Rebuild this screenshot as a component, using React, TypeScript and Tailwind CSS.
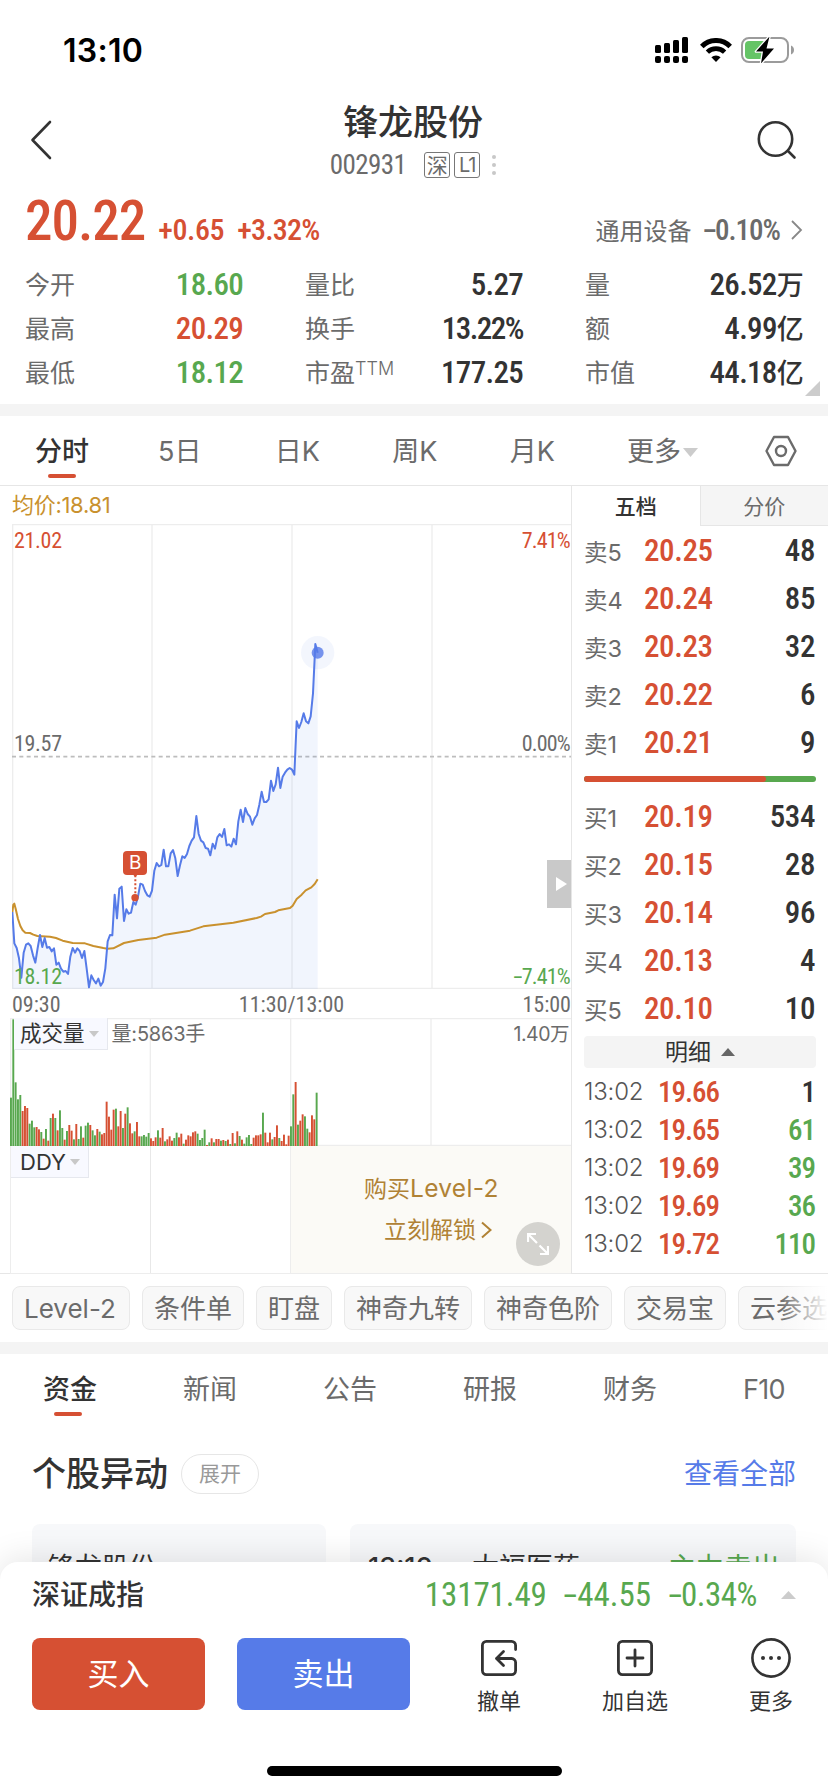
import { clsx } from "clsx";

const INK = "#333333";
const RED = "#d65033";
const GREEN = "#58a84f";
const BLUE = "#567be8";

type Tone = "up" | "down" | "flat";

const toneClass: Record<Tone, string> = {
  up: "text-[#d65033]",
  down: "text-[#58a84f]",
  flat: "text-[#333333]",
};

const stats: { label: string; sup?: string; value: string; tone: Tone }[] = [
  { label: "今开", value: "18.60", tone: "down" },
  { label: "量比", value: "5.27", tone: "flat" },
  { label: "量", value: "26.52万", tone: "flat" },
  { label: "最高", value: "20.29", tone: "up" },
  { label: "换手", value: "13.22%", tone: "flat" },
  { label: "额", value: "4.99亿", tone: "flat" },
  { label: "最低", value: "18.12", tone: "down" },
  { label: "市盈", sup: "TTM", value: "177.25", tone: "flat" },
  { label: "市值", value: "44.18亿", tone: "flat" },
];

const asks = [
  ["卖5", "20.25", "48"],
  ["卖4", "20.24", "85"],
  ["卖3", "20.23", "32"],
  ["卖2", "20.22", "6"],
  ["卖1", "20.21", "9"],
];

const bids = [
  ["买1", "20.19", "534"],
  ["买2", "20.15", "28"],
  ["买3", "20.14", "96"],
  ["买4", "20.13", "4"],
  ["买5", "20.10", "10"],
];

const trades: [string, string, string, Tone][] = [
  ["13:02", "19.66", "1", "flat"],
  ["13:02", "19.65", "61", "down"],
  ["13:02", "19.69", "39", "down"],
  ["13:02", "19.69", "36", "down"],
  ["13:02", "19.72", "110", "down"],
];

const chips = ["Level-2", "条件单", "盯盘", "神奇九转", "神奇色阶", "交易宝", "云参选股"];

// intraday price, in chart units (3 units per px)
const priceLine =
  "37,936 43,1030 50,1044 57,1075 64,1133 71,1058 78,1034 85,1030 92,1038 99,1066 106,1088 113,1044 120,1005 127,1041 134,1014 141,1043 148,1041 155,1054 162,1045 169,1094 176,1088 183,1106 190,1115 197,1113 204,1122 211,1070 218,1044 225,1058 232,1045 239,1053 246,1074 253,1053 260,1106 267,1162 274,1126 281,1140 288,1150 295,1136 302,1157 309,1146 316,1105 323,1024 330,1005 337,1006 344,884 351,955 358,866 365,860 372,963 379,928 386,941 393,938 400,906 407,914 414,890 421,851 428,854 435,873 442,886 449,890 456,872 463,812 470,789 477,799 484,795 491,749 498,799 505,799 512,760 519,750 526,775 533,828 540,796 547,769 554,774 561,762 568,738 575,722 582,712 589,648 596,702 603,722 610,727 617,744 624,746 631,766 638,731 645,746 652,712 659,702 666,711 673,687 680,736 687,733 694,740 701,716 708,733 715,664 722,629 729,666 736,624 743,642 750,650 757,674 764,655 771,645 778,614 785,575 792,606 799,606 806,598 813,542 820,573 827,553 834,503 841,564 848,530 855,518 862,509 869,504 876,509 883,524 890,364 897,384 904,366 911,340 918,364 925,370 932,349 939,280 946,132 953,158";

const averageLine =
  "37,936 40,914 43,911 47,926 54,957 61,978 68,991 76,998 90,999 100,1004 112,1008 150,1010 168,1014 188,1022 218,1029 255,1030 280,1038 310,1044 322,1046 340,1045 372,1029 415,1020 470,1013 495,1004 570,992 610,979 700,968 770,954 783,950 795,942 825,936 835,931 870,924 878,917 890,897 905,884 917,871 934,862 944,852 953,838";

// one entry per minute: bar height in chart units, r = up, g = down
const volumes =
  "145g 380g 191g 140g 153g 105r 120r 114r 67g 76g 56g 57r 50r 42g 22r 51g 16r 84g 97r 84g 47r 107g 54g 19r 45g 63r 46r 20g 66r 21g 59g 25r 61g 70g 63r 47g 32g 51r 43g 35r 39r 133r 88r 49r 109r 112g 59r 105r 54g 97r 116g 68r 38r 44g 72r 29r 29g 33g 28g 39g 23r 15r 26r 47g 25r 54r 14g 20r 29r 16r 24g 40g 26r 37r 7g 19r 32r 29r 41r 44r 37g 18g 24g 49g 3r 11g 23r 11g 21r 21r 16g 18r 15g 19r 6g 39r 8g 44r 30g 19r 7g 26g 33g 6g 25r 32r 32r 35r 100g 40r 11r 40r 20g 27r 62r 24g 15r 34r 5r 31r 59g 155g 192r 64g 76r 95r 89g 52g 41r 92r 80r 160g"
    .split(" ")
    .map((v) => ({ height: parseInt(v, 10), up: v.endsWith("r") }));

// negative number with a wide minus sign
const Negative = ({ value }: { value: string }) => (
  <>
    <span className="mx-[0.08em] inline-block scale-x-[1.7]">-</span>
    {value}
  </>
);

const StatusBar = () => (
  <div className="flex h-[88px] items-center justify-between pl-[63px] pr-[33px] pt-3">
    <span className="pt-0.5 font-['Inter'] text-[32px] font-semibold leading-none tracking-[0.3px] text-black">13:10</span>
    <div className="flex items-center gap-3">
      <svg width="33" height="26" viewBox="0 0 33 26">
        <rect x="0" y="8" width="6" height="8" rx="1.5" />
        <rect x="9" y="6" width="6" height="10" rx="1.5" />
        <rect x="18" y="3" width="6" height="13" rx="1.5" />
        <rect x="27" y="0" width="6" height="16" rx="1.5" />
        <rect x="0" y="19" width="6" height="7" rx="2" />
        <rect x="9" y="19" width="6" height="7" rx="2" />
        <rect x="18" y="19" width="6" height="7" rx="2" />
        <rect x="27" y="19" width="6" height="7" rx="2" />
      </svg>
      <svg width="32" height="24" viewBox="0 0 32 24" fill="none" stroke="#000">
        <path d="M1.8 8.4a20 20 0 0 1 28.4 0" strokeWidth="5" />
        <path d="M7.4 14.2a12.2 12.2 0 0 1 17.2 0" strokeWidth="4.6" />
        <path d="M16 24l-4.6-4.7a6.5 6.5 0 0 1 9.2 0z" fill="#000" stroke="none" />
      </svg>
      <svg width="54" height="26" viewBox="0 0 54 26" className="-ml-[3px]">
        <rect x="1" y="1" width="46" height="24" rx="7" fill="none" stroke="#9b9b9b" strokeWidth="2" />
        <path d="M50 8.500q3 1.400 3 4.500t-3 4.500z" fill="#9b9b9b" />
        <rect x="4" y="4" width="21" height="18" rx="4" fill="#65c466" />
        <path
          d="M28.500-.5L15 14.500h7L20 26.500l13-15h-7.500z"
          fill="#000"
          stroke="#fff"
          strokeWidth="2.600"
          paintOrder="stroke"
          strokeLinejoin="round"
        />
      </svg>
    </div>
  </div>
);

const Header = () => (
  <header className="flex h-[106px] items-start justify-between pl-[30px] pr-[31px]">
    <svg className="mt-[31px]" width="22" height="42" viewBox="0 0 22 42" fill="none" stroke={INK} strokeWidth="2.600">
      <path d="M20 3L2.500 21L20 39" strokeLinecap="round" strokeLinejoin="round" />
    </svg>
    <div className="flex flex-col items-center pl-[17px] pt-3">
      <h1 className="text-[35px] font-medium leading-[44px]">锋龙股份</h1>
      <div className="mt-[7px] flex h-7 items-center text-[#6b6b6b]">
        <span className="mr-[18px] font-['Roboto_Condensed'] text-[27px] leading-none tracking-[-0.6px]">002931</span>
        <span className="mr-1 flex size-[26px] items-center justify-center rounded-[3px] border border-[#777] text-[21px] leading-none">
          深
        </span>
        <span className="flex size-[26px] items-center justify-center rounded-[3px] border border-[#777] text-[20px] leading-none tracking-tighter">
          L1
        </span>
        <svg className="ml-3" width="4" height="20" viewBox="0 0 4 20" fill="#c8c8c8">
          <circle cx="2" cy="2" r="2" />
          <circle cx="2" cy="10" r="2" />
          <circle cx="2" cy="18" r="2" />
        </svg>
      </div>
    </div>
    <svg className="mt-[32px]" width="40" height="40" viewBox="0 0 40 40" fill="none" stroke={INK} strokeWidth="2.600">
      <circle cx="18.500" cy="19" r="16.700" />
      <path d="M31 31l6.500 6.500" strokeLinecap="round" />
    </svg>
  </header>
);

const Quote = () => (
  <section className="relative h-[210px] px-[25px]">
    <div className="flex h-[69px] items-baseline font-['Roboto_Condensed','Noto_Sans_CJK_SC'] leading-[55px] text-[#d65033]">
      <span className="text-[55px] font-medium tracking-[-1px]">20.22</span>
      <span className="ml-[13px] text-[30px] font-medium tracking-[-0.4px]">+0.65</span>
      <span className="ml-[13px] text-[30px] font-medium tracking-[-0.8px]">+3.32%</span>
      <span className="ml-auto text-[24px] text-[#6b6b6b]">通用设备</span>
      <span className="ml-[11px] text-[29px] font-medium tracking-[-1px] text-[#6b6b6b]">
        <Negative value="0.10%" />
      </span>
      <svg className="ml-[11px]" width="12" height="20" viewBox="0 0 12 20" fill="none" stroke="#888" strokeWidth="1.800">
        <path d="M1 1l9 9l-9 9" />
      </svg>
    </div>
    <dl className="grid grid-cols-3 gap-x-[62px]">
      {stats.map((s) => (
        <div key={s.label} className="flex h-11 items-center justify-between">
          <dt className="flex items-start text-[25px] leading-8 text-[#6b6b6b]">
            {s.label}
            {s.sup && <span className="text-[18px] font-light leading-6">{s.sup}</span>}
          </dt>
          <dd
            className={clsx(
              "font-['Roboto_Condensed','Noto_Sans_CJK_SC'] text-[31px] font-medium leading-8",
              s.value.endsWith("%") ? "tracking-[-1.5px]" : "tracking-[-0.7px]",
              toneClass[s.tone],
            )}
          >
            {s.value.replace(/[万亿]/, "")}
            <span className="text-[27px]">{s.value.match(/[万亿]/)?.[0]}</span>
          </dd>
        </div>
      ))}
    </dl>
    <svg className="absolute bottom-2 right-2" width="15" height="15" viewBox="0 0 15 15">
      <path d="M15 0v15H0z" fill="#cccccc" />
    </svg>
  </section>
);

const PeriodTabs = () => (
  <nav className="flex h-[70px] items-center border-b border-[#e6e6e6] pl-[3px] text-[27px] text-[#6b6b6b]">
    <div className="relative w-[118px] pt-[3px] text-center font-medium text-[#333]">
      分时
      <i className="absolute -bottom-[6px] left-[45px] h-1 w-7 rounded-full bg-[#d65033]" />
    </div>
    {["5日", "日K", "周K", "月K"].map((tab) => (
      <div key={tab} className="w-[117.5px] pt-[3px] text-center">
        {tab}
      </div>
    ))}
    <div className="ml-[36px] flex items-center pt-[3px]">
      更多
      <svg className="ml-0.5" width="15" height="9" viewBox="0 0 15 9">
        <path d="M0 0h15L7.500 9z" fill="#cccccc" />
      </svg>
    </div>
    <svg className="ml-auto mr-[31px]" width="32" height="32" viewBox="0 0 32 32" fill="none" stroke="#6b6b6b" strokeWidth="2.400">
      <path d="M9 2h14l7.500 14L23 30H9L1.500 16z" strokeLinejoin="round" />
      <circle cx="16" cy="16" r="5" />
    </svg>
  </nav>
);

const PriceChart = () => (
  <div className="relative ml-3 h-[465px] font-['Roboto_Condensed'] text-[22px] leading-6 tracking-[-0.3px] text-[#6b6b6b]">
    <svg className="block" width="559" height="465" viewBox="36 -228 1677 1395">
      <g stroke="#ededed" strokeWidth="4">
        <path d="M36-226H1713M36 1165H1713M38-228V1167M456-228V1167M876-228V1167M1296-228V1167" />
      </g>
      <path d="M36 470H1713" stroke="#bdbdbd" strokeWidth="5" strokeDasharray="12 10" />
      <polygon points={`37,1167 ${priceLine} 953,1167`} fill="#4f7de8" fillOpacity="0.08" />
      <polyline points={averageLine} fill="none" stroke="#c9912e" strokeWidth="6" strokeLinejoin="round" />
      <circle cx="953" cy="158" r="50" fill={BLUE} fillOpacity="0.07" />
      <circle cx="953" cy="158" r="18" fill={BLUE} fillOpacity="0.8" />
      <polyline points={priceLine} fill="none" stroke={BLUE} strokeWidth="6" strokeLinejoin="round" />
      <circle cx="405" cy="893" r="11" fill={RED} />
      <path d="M406 826V886" stroke={RED} strokeWidth="6" strokeDasharray="6 6" />
      <path d="M398 823h16l-8 8z" fill={RED} />
    </svg>
    <span className="absolute left-0.5 top-[5px] text-[#d65033]">21.02</span>
    <span className="absolute right-px top-[5px] tracking-[-0.8px] text-[#d65033]">7.41%</span>
    <span className="absolute left-0.5 top-[208px]">19.57</span>
    <span className="absolute right-px top-[208px] tracking-[-0.8px]">0.00%</span>
    <span className="absolute left-0.5 top-[441px] text-[#58a84f]">18.12</span>
    <span className="absolute right-px top-[441px] tracking-[-0.8px] text-[#58a84f]">
      <Negative value="7.41%" />
    </span>
    {/* buy marker */}
    <span className="absolute left-[111px] top-[327px] flex size-6 items-center justify-center rounded bg-[#d65033] font-['Inter'] text-[19px] text-white">
      B
    </span>
    {/* panel handle */}
    <span className="absolute right-0 top-[336px] flex h-12 w-6 items-center justify-center bg-[#c9c9c9] pl-1">
      <svg width="11" height="14" viewBox="0 0 11 14">
        <path d="M0 0l11 7l-11 7z" fill="#fff" />
      </svg>
    </span>
  </div>
);

const SubLabel = ({ text, className }: { text: string; className?: string }) => (
  <span
    className={clsx(
      "flex h-8 items-center border-b border-r border-[#e6e8ee] bg-[#f8f9ff] pr-2 leading-none text-[#333]",
      className,
    )}
  >
    {text}
    <svg className="ml-1" width="10" height="6" viewBox="0 0 10 6">
      <path d="M0 0h10L5 6z" fill="#c8c8c8" />
    </svg>
  </span>
);

const VolumeChart = () => (
  <div className="relative ml-2.5 h-[128px]">
    <svg className="block" width="561" height="128" viewBox="31 113 1683 384">
      <path d="M31 115H1714M33 113V497M452 113V497M873 113V497M1294 113V497M31 495H1714" stroke="#ededed" strokeWidth="4" />
      {volumes.map((v, i) => (
        <rect key={i} x={31 + i * 7} y={497 - v.height} width="5.800" height={v.height} fill={v.up ? RED : GREEN} />
      ))}
    </svg>
    <div className="absolute left-1 top-0 flex items-center text-[#6b6b6b]">
      <SubLabel text="成交量" className="pl-1.5 text-[21.5px]" />
      <span className="ml-1 text-[20px] leading-none tracking-[-0.2px]">量:5863手</span>
    </div>
    <span className="absolute right-0.5 top-1 text-[19.5px] leading-6 tracking-tight text-[#6b6b6b]">1.40万</span>
  </div>
);

const DdyPanel = () => (
  <div className="ml-2.5 flex h-[128px] border-b border-l border-[#ededed]">
    <div className="flex w-[140px] items-start border-r border-[#e8e8e8]">
      <SubLabel text="DDY" className="pl-[9px] text-[22px]" />
    </div>
    <div className="w-[140px] border-r border-[#ededed]" />
    <div className="relative flex-1 bg-[#fbfaf6] text-[23px] leading-8 text-[#b08235]">
      <p className="h-8 pl-[73px] pt-[26px]">
        购买<span className="text-[24.5px] tracking-[0.3px]">Level-2</span>
      </p>
      <p className="mt-[36px] flex items-center pl-[93px]">
        立刻解锁
        <svg className="ml-[5px]" width="11" height="18" viewBox="0 0 11 18" fill="none" stroke="#b08235" strokeWidth="2">
          <path d="M1 1.500l8.500 7.500L1 16.500" />
        </svg>
      </p>
      <span className="absolute bottom-[7px] right-[11px] flex size-11 items-center justify-center rounded-full bg-[#d4d3cf]">
        <svg width="22" height="22" viewBox="0 0 22 22" fill="none" stroke="#fff" strokeWidth="2.200">
          <path d="M1 9V1h8M1 1l9 9M21 13v8h-8M21 21l-8.500-8.500" />
        </svg>
      </span>
    </div>
  </div>
);

const BookRow = ({ row }: { row: string[] }) => (
  <div className="flex h-12 items-center font-['Roboto_Condensed'] text-[31px] font-medium leading-none tracking-[-0.4px]">
    <span className="mt-[5px] w-[60px] font-['Inter','Noto_Sans_CJK_SC'] text-[23.5px] font-normal tracking-normal text-[#6b6b6b]">
      {row[0]}
    </span>
    <span className="text-[#d65033]">{row[1]}</span>
    <span className="ml-auto text-[#333]">{row[2]}</span>
  </div>
);

const OrderBook = () => (
  <aside className="w-[257px] border-l border-[#e6e6e6]">
    <div className="flex h-10 text-center text-[21px] leading-[41px]">
      <div className="flex-1 font-medium text-[#333]">五档</div>
      <div className="flex-1 border-b border-l border-[#e6e6e6] bg-[#f5f5f5] text-[#6b6b6b]">分价</div>
    </div>
    <div className="pl-3 pr-[13px]">
      {asks.map((row) => (
        <BookRow key={row[0]} row={row} />
      ))}
      <div className="my-2.5 -mr-px h-1.5 rounded-full bg-[#58a84f]">
        <div className="h-full w-[182px] rounded-full bg-[#d65033]" />
      </div>
      {bids.map((row) => (
        <BookRow key={row[0]} row={row} />
      ))}
      <div className="-mr-px mb-[5px] mt-1 flex h-8 items-center justify-center rounded bg-[#f4f4f4] text-[23px] leading-none">
        明细
        <svg className="ml-2.5" width="14" height="8" viewBox="0 0 14 8">
          <path d="M0 8h14L7 0z" fill="#666" />
        </svg>
      </div>
      {trades.map(([time, price, volume, tone], i) => (
        <div
          key={i}
          className="flex h-[38px] items-center font-['Roboto_Condensed'] text-[29px] font-medium leading-none tracking-[-1px]"
        >
          <span className="w-[74px] font-['Inter'] text-[24px] font-light tracking-[-0.2px] text-[#555]">{time}</span>
          <span className="text-[#d65033]">{price}</span>
          <span className={clsx("ml-auto", toneClass[tone])}>{volume}</span>
        </div>
      ))}
    </div>
  </aside>
);

const NewsTabs = () => (
  <nav className="flex h-[76px] pl-[43px] pt-[17px] text-[27px] leading-[38px] text-[#6b6b6b]">
    <div className="relative w-[140px] shrink-0 font-medium text-[#333]">
      资金
      <i className="absolute left-[11px] top-[41px] h-1 w-7 rounded-full bg-[#d65033]" />
    </div>
    {["新闻", "公告", "研报", "财务"].map((tab) => (
      <div key={tab} className="w-[140px] shrink-0">
        {tab}
      </div>
    ))}
    <div className="shrink-0 tracking-tight">F10</div>
  </nav>
);

const BottomSheet = () => (
  <div className="absolute inset-x-0 bottom-0 h-[230px] rounded-t-[18px] bg-white shadow-[0_-4px_32px_rgba(0,0,0,0.1)]">
    <div className="flex h-16 items-center px-8 pt-px">
      <span className="text-[28px] font-medium">深证成指</span>
      <div className="ml-auto flex items-center gap-[17px] font-['Roboto_Condensed'] text-[33px] leading-none text-[#58a84f]">
        <span className="tracking-[-0.1px]">13171.49</span>
        <span>
          <Negative value="44.55" />
        </span>
        <span className="tracking-[-0.5px]">
          <Negative value="0.34%" />
        </span>
      </div>
      <svg className="ml-6" width="15" height="8" viewBox="0 0 15 8">
        <path d="M0 8h15L7.500 0z" fill="#cccccc" />
      </svg>
    </div>
    <div className="flex pl-8 pt-3">
      <button className="h-[72px] w-[173px] shrink-0 rounded-lg bg-[#d65033] text-[31px] text-white">买入</button>
      <button className="ml-8 h-[72px] w-[173px] shrink-0 rounded-lg bg-[#567be8] text-[31px] text-white">卖出</button>
      <div className="ml-[21px] flex shrink-0 text-center text-[22px] leading-8">
        <div className="flex w-[136px] flex-col items-center">
          <svg width="40" height="40" viewBox="0 0 40 40" fill="none" stroke={INK} strokeWidth="2.800" strokeLinecap="round">
            <path d="M36.600 11.500V7.400a4 4 0 0 0-4-4H7.400a4 4 0 0 0-4 4v25.200a4 4 0 0 0 4 4h25.200a4 4 0 0 0 4-4V24.500a4 4 0 0 0-4-4H18" />
            <path d="M24.500 13.500l-7 7l7 7" strokeLinejoin="round" />
          </svg>
          <span className="mt-[7px]">撤单</span>
        </div>
        <div className="flex w-[136px] flex-col items-center">
          <svg width="40" height="40" viewBox="0 0 40 40" fill="none" stroke={INK} strokeWidth="2.800" strokeLinecap="round">
            <rect x="3.400" y="3.400" width="33.200" height="33.200" rx="4" />
            <path d="M20 12v16M12 20h16" />
          </svg>
          <span className="mt-[7px]">加自选</span>
        </div>
        <div className="flex w-[136px] flex-col items-center">
          <svg width="40" height="40" viewBox="0 0 40 40" fill="none" stroke={INK} strokeWidth="2.600">
            <circle cx="20" cy="20" r="18.600" />
            <g fill={INK} stroke="none">
              <circle cx="12" cy="20" r="2" />
              <circle cx="20" cy="20" r="2" />
              <circle cx="28" cy="20" r="2" />
            </g>
          </svg>
          <span className="mt-[7px]">更多</span>
        </div>
      </div>
    </div>
    <div className="mx-auto mt-[49px] h-2.5 w-[295px] rounded-full bg-black" />
  </div>
);

export default function App() {
  return (
    <div className="relative h-[1792px] w-[828px] overflow-hidden bg-white font-['Inter','Noto_Sans_CJK_SC',sans-serif] text-[#333]">
      <StatusBar />
      <Header />
      <Quote />
      <div className="h-3 bg-[#f4f4f4]" />
      <PeriodTabs />

      <div className="flex h-[788px] border-b border-[#e6e6e6]">
        <div className="w-[571px]">
          <div className="h-[38px] pl-3 text-[22px] leading-[39px] tracking-[-0.3px] text-[#c9912e]">均价:18.81</div>
          <PriceChart />
          <div className="ml-3 flex h-[29px] items-center justify-between pt-[3px] font-['Roboto_Condensed'] text-[22px] leading-none text-[#6b6b6b]">
            <span>09:30</span>
            <span>11:30/13:00</span>
            <span>15:00</span>
          </div>
          <VolumeChart />
          <DdyPanel />
        </div>
        <OrderBook />
      </div>

      <div className="relative flex h-[68px] items-center gap-3 overflow-hidden pl-3">
        {chips.map((chip) => (
          <span
            key={chip}
            className="flex h-11 shrink-0 items-center rounded-lg border border-[#e9e9e9] bg-[#f8f8f8] px-[11px] pt-0.5 text-[26px] leading-none text-[#6b6b6b] first:min-w-[118px]"
          >
            {chip}
          </span>
        ))}
        <div className="absolute inset-y-0 right-0 w-12 bg-gradient-to-r from-white/0 to-white" />
      </div>
      <div className="h-3 bg-[#f4f4f4]" />
      <NewsTabs />

      <div className="flex items-center px-8 pt-[24px]">
        <h2 className="text-[34px] font-medium leading-10">个股异动</h2>
        <span className="ml-[13px] flex h-10 w-[78px] items-center justify-center rounded-full border border-[#e6e6e6] text-[21px] text-[#999]">
          展开
        </span>
        <a className="ml-auto text-[28px] leading-10 text-[#567be8]">查看全部</a>
      </div>
      <div className="flex gap-6 px-8 pt-[30px] text-[27px] leading-10">
        <div className="h-[120px] w-[294px] rounded-lg bg-[#f7f8fa] pl-4 pt-6">锋龙股份</div>
        <div className="flex h-[120px] flex-1 rounded-lg bg-[#f7f8fa] pl-[18px] pr-4 pt-6">
          <span className="font-medium">13:10</span>
          <span className="ml-[39px]">太福医药</span>
          <span className="ml-auto text-[28px] text-[#58a84f]">主力卖出</span>
        </div>
      </div>

      <BottomSheet />
    </div>
  );
}
